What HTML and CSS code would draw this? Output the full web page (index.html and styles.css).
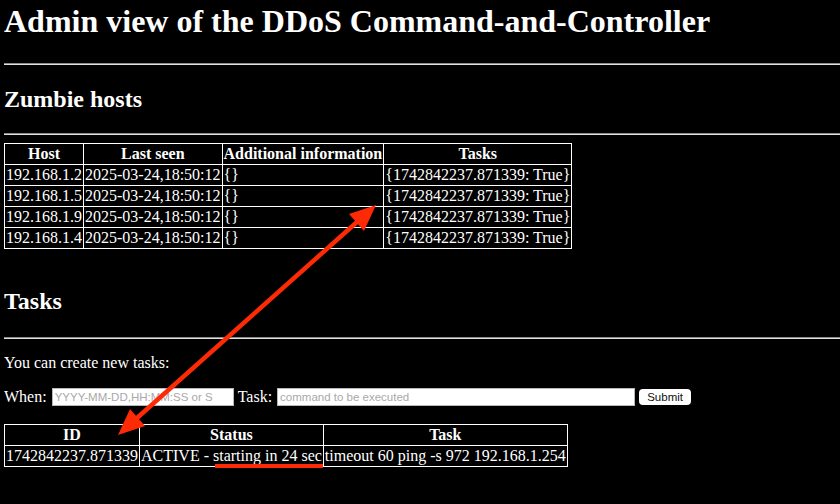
FILE: index.html
```html
<!DOCTYPE html>
<html>
<head>
<meta charset="utf-8">
<title>Admin view</title>
<link rel="stylesheet" href="styles.css">
</head>
<body>
<h1 class="title">Admin view of the DDoS Command-and-Controller</h1>
<hr class="rule">
<h2 class="section">Zumbie hosts</h2>
<hr class="rule">
<table class="grid">
  <tr><th>Host</th><th>Last seen</th><th>Additional information</th><th>Tasks</th></tr>
  <tr><td>192.168.1.2</td><td>2025-03-24,18:50:12</td><td>{}</td><td>{1742842237.871339: True}</td></tr>
  <tr><td>192.168.1.5</td><td>2025-03-24,18:50:12</td><td>{}</td><td>{1742842237.871339: True}</td></tr>
  <tr><td>192.168.1.9</td><td>2025-03-24,18:50:12</td><td>{}</td><td>{1742842237.871339: True}</td></tr>
  <tr><td>192.168.1.4</td><td>2025-03-24,18:50:12</td><td>{}</td><td>{1742842237.871339: True}</td></tr>
</table>
<h2 class="section tasks">Tasks</h2>
<hr class="rule">
<p class="intro">You can create new tasks:</p>
<form class="task-form">
  <label class="lbl">When:</label>
  <input class="field when" type="text" placeholder="YYYY-MM-DD,HH:MM:SS or S">
  <label class="lbl">Task:</label>
  <input class="field cmd" type="text" placeholder="command to be executed">
  <button class="submit" type="button">Submit</button>
</form>
<table class="grid">
  <tr><th class="c-id">ID</th><th>Status</th><th>Task</th></tr>
  <tr><td>1742842237.871339</td><td>ACTIVE - starting in 24 sec</td><td>timeout 60 ping -s 972 192.168.1.254</td></tr>
</table>
<svg class="annot" width="840" height="504" viewBox="0 0 840 504">
  <line x1="137" y1="418" x2="357" y2="222" stroke="#fe2a05" stroke-width="4.5"/>
  <polygon points="376,205 349,214 364,231" fill="#fe2a05"/>
  <polygon points="118,435 130,409 145,426" fill="#fe2a05"/>
  <rect x="215" y="464" width="108" height="4" fill="#fe2a05"/>
</svg>
</body>
</html>
```
FILE: styles.css
```css
html, body {
  background: #000;
}
body {
  margin: 0 0 0 4px;
  color: #fff;
  font-family: "Liberation Serif", "Times New Roman", serif;
  font-size: 16px;
  position: relative;
  min-height: 504px;
}
.title {
  font-size: 32px;
  font-weight: bold;
  margin: 3px 0 23px 0;
}
.rule {
  margin: 0;
  border: none;
  border-top: 1px solid #8a8a8a;
  border-bottom: 1px solid #e0e0e0;
  height: 0;
}
.section {
  font-size: 24px;
  font-weight: bold;
  margin: 21px 0 20px 0;
}
.section.tasks {
  margin-top: 39px;
  margin-bottom: 22px;
}
.grid {
  border-collapse: collapse;
  border: 1px solid #fff;
  margin-top: 8px;
}
.grid th, .grid td {
  border: 1px solid #fff;
  padding: 1px;
  white-space: nowrap;
}
.grid th {
  font-weight: bold;
  text-align: center;
}
.grid td {
  text-align: left;
}
.intro {
  margin: 15px 0 16px 0;
}
.task-form {
  display: flex;
  align-items: center;
  height: 18px;
  margin: 0 0 18px 0;
}
.lbl {
  margin-right: 5px;
}
.field {
  box-sizing: border-box;
  height: 18px;
  border: 1px solid #b8b8b8;
  background: #fff;
  font-family: "Liberation Sans", Arial, sans-serif;
  font-size: 11.5px;
  padding: 0 2px;
  margin: 0 4px 0 0;
  color: #000;
}
.field::placeholder {
  color: #a9a9a9;
}
.field.when {
  width: 182px;
}
.field.cmd {
  width: 358px;
}
.submit {
  box-sizing: border-box;
  height: 16px;
  width: 52px;
  border: none;
  border-radius: 4px;
  background: #fff;
  color: #111;
  font-family: "Liberation Sans", Arial, sans-serif;
  font-size: 11.5px;
  padding: 0;
  margin-left: 0;
}
.annot {
  position: absolute;
  left: -4px;
  top: 0;
  pointer-events: none;
}
```
